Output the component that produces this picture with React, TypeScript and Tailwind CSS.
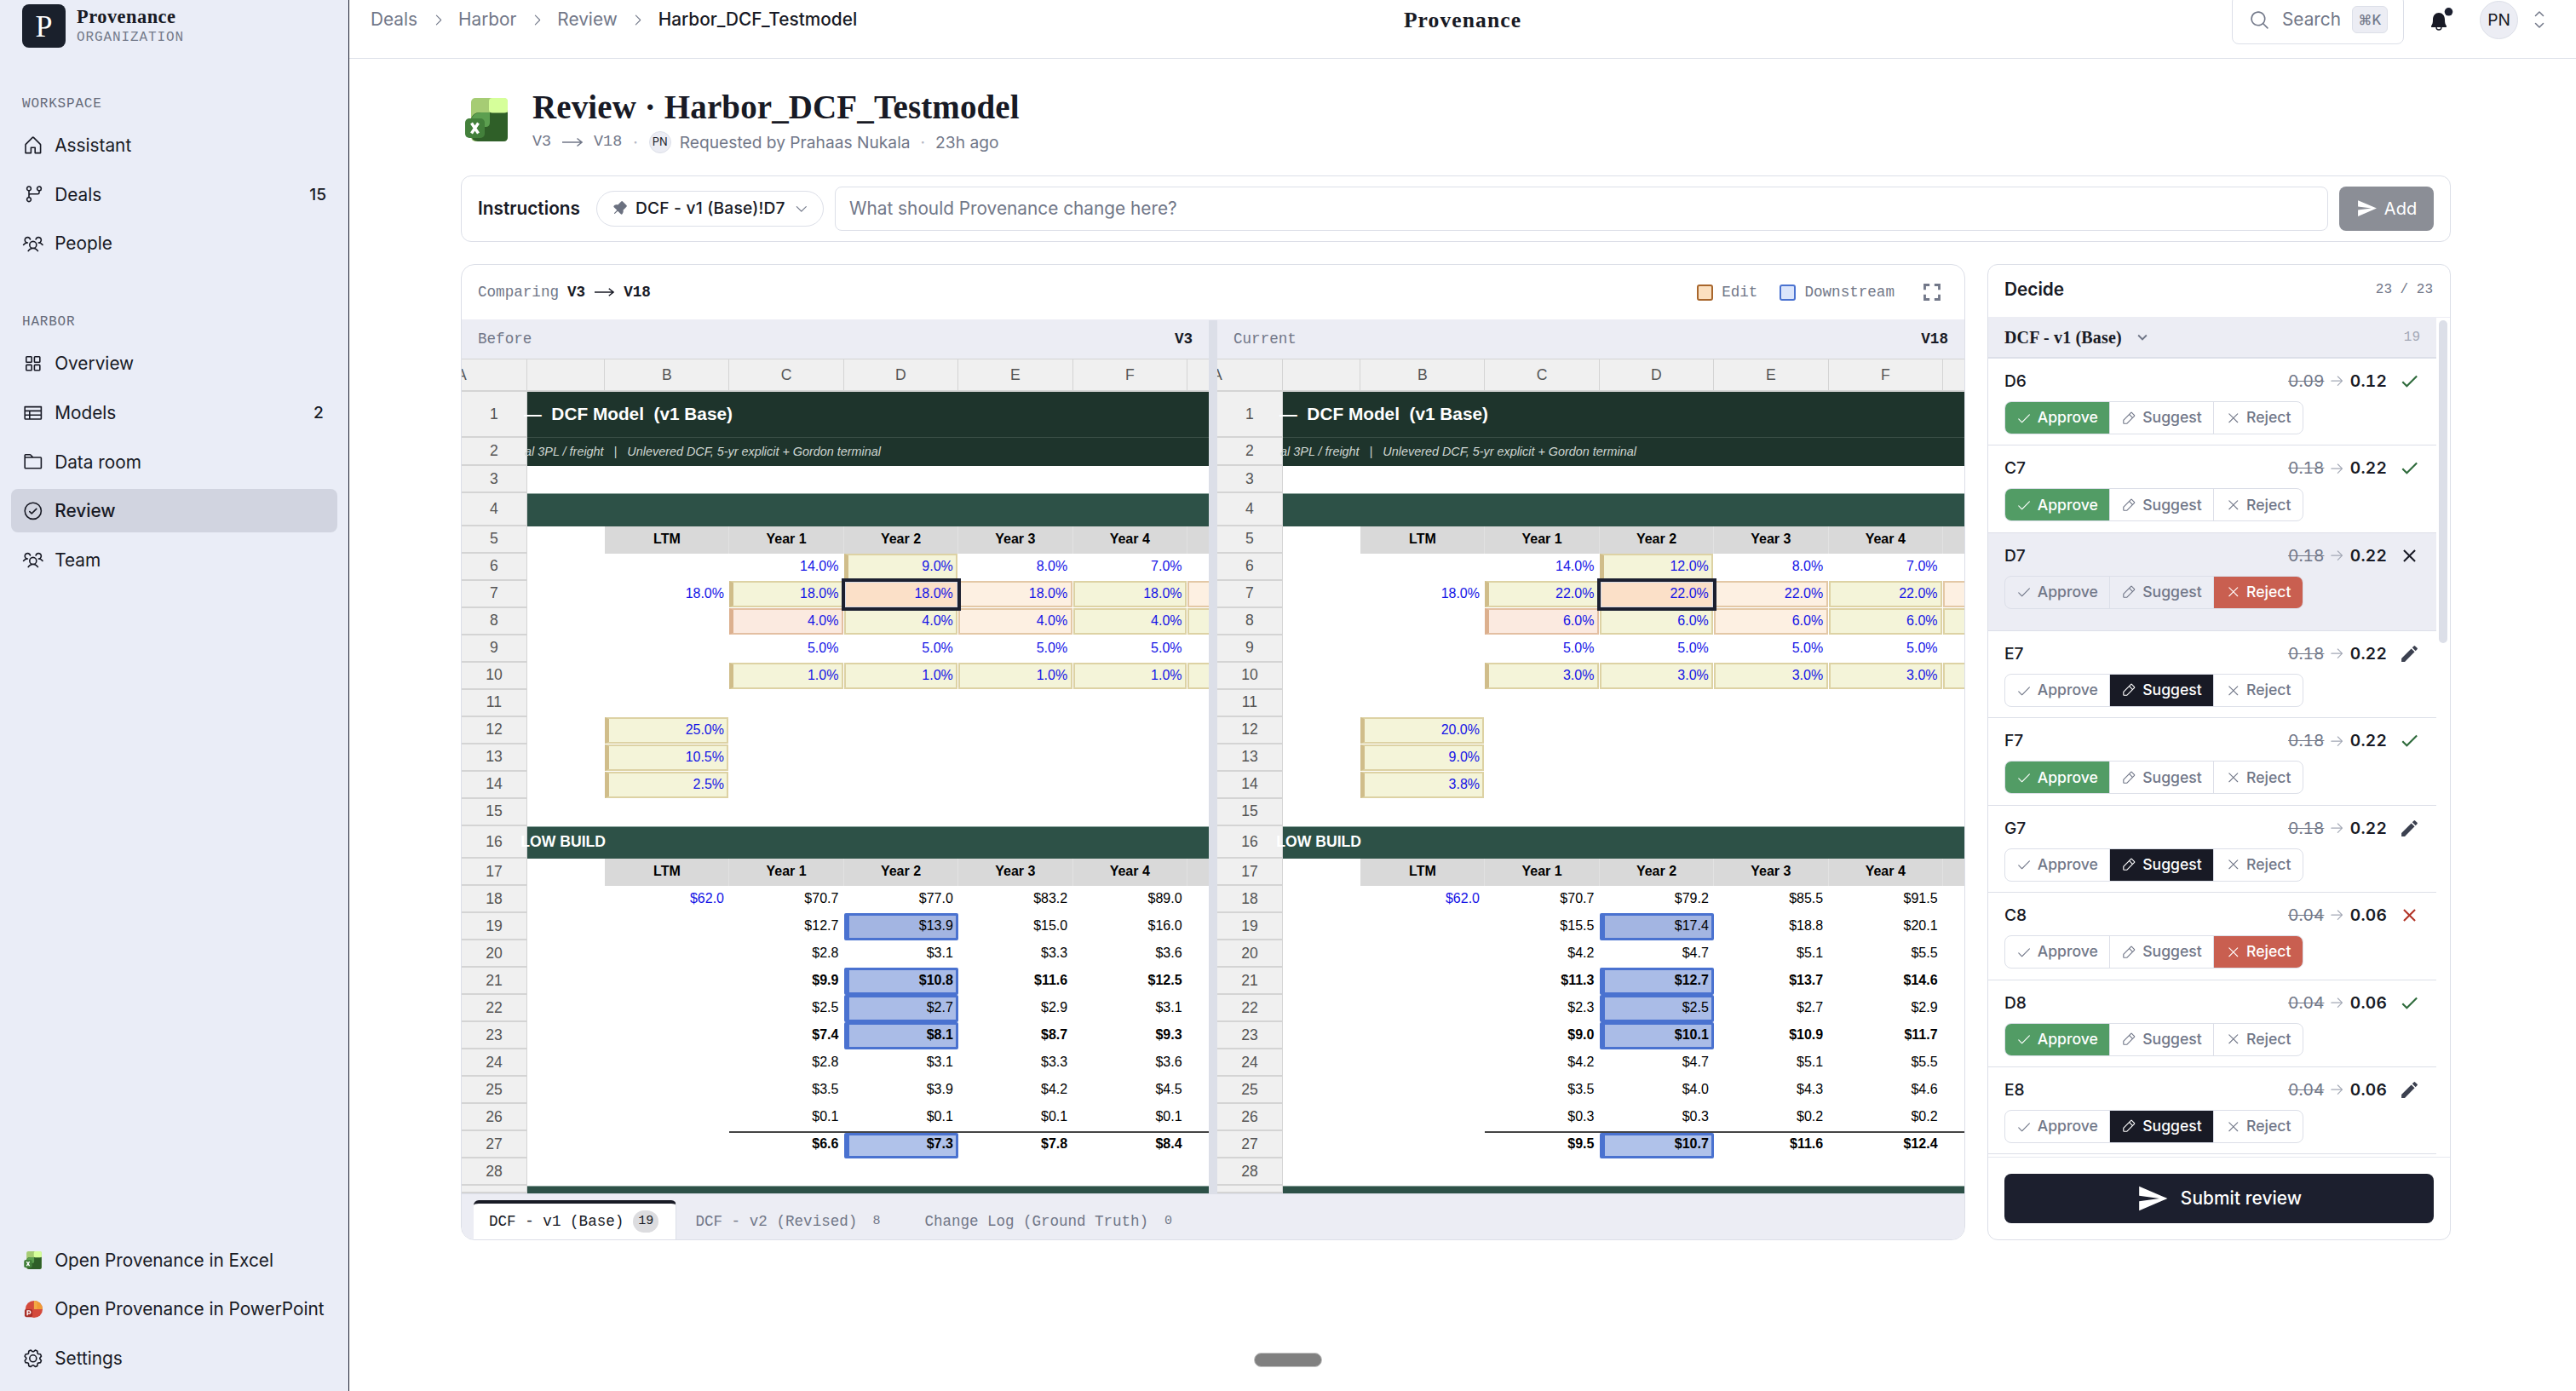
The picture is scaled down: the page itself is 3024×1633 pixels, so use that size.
import type { ReactNode } from "react";
import clsx from "clsx";
import {
  PiArrowRight,
  PiCaretDown,
  PiCaretRight,
  PiCaretUpDown,
  PiCheck,
  PiCheckCircle,
  PiFolder,
  PiGear,
  PiGitBranch,
  PiHouse,
  PiMagnifyingGlass,
  PiPencilSimple,
  PiPushPinFill,
  PiSquaresFour,
  PiTable,
  PiUsersThree,
  PiX,
} from "react-icons/pi";
import { MdCheck, MdClose, MdEdit, MdExpandMore, MdFullscreen, MdSend } from "react-icons/md";

const mono = "font-['Liberation_Mono',monospace]";
const serif = "font-['Liberation_Serif',serif]";
const sans = "font-['Inter',sans-serif]";

const ExcelLogo = ({ className }: { className?: string }) => (
  <svg viewBox="0 0 50 51" className={className}>
    <rect x="7" y="0" width="43" height="51" rx="5" fill="#a6cc74" />
    <path d="M7 25q2-8 10-8h33v29q0 5-5 5H15q-8-1-8-8z" fill="#2f5f28" />
    <path d="M7 26q2-9 12-9h10v12q0 5-5 5H7z" fill="#5c9f50" />
    <rect x="28" y="0" width="22" height="17.500" rx="4" fill="#d6ff9a" />
    <rect x="0" y="24" width="23" height="23" rx="5" fill="#43803b" />
    <path d="M7.500 29.500l8 12M15.500 29.500l-8 12" stroke="#fff" strokeWidth="3.400" />
  </svg>
);

const PowerPointLogo = ({ className }: { className?: string }) => (
  <svg viewBox="0 0 24 24" className={className}>
    <circle cx="13" cy="12" r="11" fill="#d44a3c" />
    <path d="M13 1a11 11 0 0 1 11 11H13z" fill="#f09b35" />
    <path d="M13 1a11 11 0 0 1 4 .8V12h-4z" fill="#f3a845" />
    <rect x="1" y="12" width="10" height="10" rx="2" fill="#a92f28" />
    <path d="M4.500 20v-6h2.200a1.700 1.700 0 0 1 0 3.600H4.500" fill="none" stroke="#fff" strokeWidth="1.500" />
  </svg>
);

const Bell = () => (
  <svg viewBox="0 0 28 28" className="h-7 w-7">
    <path d="M2 21.500c1.500-2 2-3.500 2-7.500C4 9 7 6 11 6s7 3 7 8c0 4 .5 5.500 2 7.500q.5 1.500-1 1.500H3q-1.500 0-1-1.500z" fill="#181a25" />
    <path d="M8 23a3 3 0 0 0 6 0" fill="none" stroke="#181a25" strokeWidth="1.400" />
    <circle cx="22.500" cy="4.800" r="4.800" fill="#1c2030" />
  </svg>
);

const LongArrow = ({ className }: { className?: string }) => (
  <svg viewBox="0 0 24 12" className={className} fill="none" stroke="currentColor" strokeWidth="1.500">
    <path d="M0 6h23M17.500 1.500L23 6l-5.500 4.500" />
  </svg>
);

type NavItemProps = { icon: ReactNode; label: string; count?: string; active?: boolean };

const NavItem = ({ icon, label, count, active }: NavItemProps) => (
  <div
    className={clsx(
      "flex h-[51.2px] items-center rounded-[8px] pr-[13px] pl-[13px] text-[20.8px]",
      active && "bg-[#d1d4e0] font-medium",
    )}
  >
    <span className="mr-[12.6px] flex w-[25.6px] shrink-0 justify-center text-[25.6px]">{icon}</span>
    <span className="flex-1 whitespace-nowrap">{label}</span>
    {count && <span className="min-w-[18px] text-center text-[19.2px] font-medium">{count}</span>}
  </div>
);

const Sidebar = () => (
  <aside className="flex h-full w-[410px] shrink-0 flex-col border-r border-[#1c2030] bg-[#eaedf7] px-[13px]">
    <div className="mt-[5px] flex h-[51px] items-center gap-[13px] px-[13px]">
      <div className={clsx("flex h-[51px] w-[51px] items-center justify-center rounded-[8px] bg-[#1a202c] text-[36px] text-white", serif)}>
        P
      </div>
      <div className="pt-[3px]">
        <div className={clsx("text-[22.4px] leading-[24px] font-bold tracking-[0.022em]", serif)}>Provenance</div>
        <div className={clsx("text-[16px] leading-[24px] tracking-[0.056em] text-[#747a8a]", mono)}>ORGANIZATION</div>
      </div>
    </div>
    <div className={clsx("mt-[56px] px-[13px] text-[16px] leading-[20px] tracking-[0.05em] text-[#666b7a]", mono)}>WORKSPACE</div>
    <nav className="mt-[13px] flex flex-col gap-[6.4px]">
      <NavItem icon={<PiHouse />} label="Assistant" />
      <NavItem icon={<PiGitBranch />} label="Deals" count="15" />
      <NavItem icon={<PiUsersThree />} label="People" />
    </nav>
    <div className={clsx("mt-[57px] px-[13px] text-[16px] leading-[20px] tracking-[0.05em] text-[#666b7a]", mono)}>HARBOR</div>
    <nav className="mt-[13px] flex flex-col gap-[6.4px]">
      <NavItem icon={<PiSquaresFour />} label="Overview" />
      <NavItem icon={<PiTable />} label="Models" count="2" />
      <NavItem icon={<PiFolder />} label="Data room" />
      <NavItem icon={<PiCheckCircle />} label="Review" active />
      <NavItem icon={<PiUsersThree />} label="Team" />
    </nav>
    <nav className="mt-auto mb-[13px] flex flex-col gap-[6.4px]">
      <NavItem icon={<ExcelLogo className="h-[21px] w-[21px]" />} label="Open Provenance in Excel" />
      <NavItem icon={<PowerPointLogo className="h-[22px] w-[22px]" />} label="Open Provenance in PowerPoint" />
      <NavItem icon={<PiGear />} label="Settings" />
    </nav>
  </aside>
);

const Header = () => (
  <header className="grid h-[69px] grid-cols-[1fr_auto_1fr] items-center border-b border-[#dcdfe8] pr-[31px] pb-[22px] pl-[26px]">
    <div className="flex items-center gap-[15.500px] text-[20.8px] text-[#717788]">
      <span className="-ml-px">Deals</span>
      <PiCaretRight className="text-[17px]" />
      <span>Harbor</span>
      <PiCaretRight className="text-[17px]" />
      <span>Review</span>
      <PiCaretRight className="text-[17px]" />
      <span className="font-medium text-[#181a25]">Harbor_DCF_Testmodel</span>
    </div>
    <div className={clsx("pt-px pl-[5px] text-[25.6px] leading-none font-bold tracking-[0.042em]", serif)}>Provenance</div>
    <div className="flex h-[46px] items-center justify-end">
      <div className="mr-[30px] flex h-[58px] w-[202px] shrink-0 items-center rounded-[8px] border border-[#dcdfe8] pl-[19px] text-[20.8px] text-[#717788]">
        <PiMagnifyingGlass className="text-[25px]" />
        <span className="ml-[14px]">Search</span>
        <span className="ml-[13px] flex h-[32px] w-[42px] items-center justify-center rounded-[6px] border border-[#dcdfe8] bg-[#ecedf4] text-[16px] font-medium">
          ⌘K
        </span>
      </div>
      <Bell />
      <div className="ml-[31px] flex h-[45px] w-[45px] items-center justify-center rounded-full border border-[#dcdfe8] bg-[#ecedf4] text-[19.2px]">
        PN
      </div>
      <PiCaretUpDown className="ml-[13px] text-[24px] text-[#717788]" />
    </div>
  </header>
);

const Title = () => (
  <div className="flex h-[60px] items-start">
    <ExcelLogo className="mt-[5px] ml-[5px] h-[51px] w-[50px]" />
    <div className="ml-[29px]">
      <h1 className={clsx("-mt-[4px] text-[39px] leading-[40px] font-bold tracking-[0.003em] whitespace-nowrap", serif)}>
        Review · Harbor_DCF_Testmodel
      </h1>
      <div className="mt-[8px] flex h-[26px] items-center text-[19.2px] text-[#717788]">
        <span className={clsx("text-[18.4px]", mono)}>V3</span>
        <LongArrow className="mr-[13px] ml-[13px] h-[12px] w-[24px]" />
        <span className={clsx("text-[18.4px]", mono)}>V18</span>
        <span className="mx-[13px] text-[#b4b8c4]">·</span>
        <span className="mr-[10px] flex h-[26px] w-[26px] items-center justify-center rounded-full border border-[#dcdfe8] bg-[#ecedf4] text-[12.8px] text-[#181a25]">
          PN
        </span>
        <span>Requested by Prahaas Nukala</span>
        <span className="mx-[12px] text-[#b4b8c4]">·</span>
        <span>23h ago</span>
      </div>
    </div>
  </div>
);

const Instructions = () => (
  <div className="mt-[36px] flex h-[78px] items-center rounded-[12px] border border-[#dcdfe8] pr-[19px] pb-px pl-[19px] text-[20.8px]">
    <span className="w-[139px] text-[20.8px] font-semibold">Instructions</span>
    <div className="flex h-[42px] w-[267px] items-center rounded-full border border-[#dcdfe8] pl-[17px] text-[19.2px] font-medium">
      <PiPushPinFill className="text-[19px] text-[#6b7180]" />
      <span className="ml-[9px] flex-1 tracking-[0.01em]">DCF - v1 (Base)!D7</span>
      <PiCaretDown className="mr-[16px] text-[17.6px] text-[#717788]" />
    </div>
    <div className="ml-[13px] flex h-[52px] flex-1 items-center rounded-[8px] border border-[#dcdfe8] pl-[16px] text-[#717788]">
      What should Provenance change here?
    </div>
    <button className="ml-[13px] flex h-[52px] w-[111px] items-center justify-center gap-[8px] rounded-[8px] bg-[#8b8e96] text-[20px] text-white">
      <MdSend className="text-[25px]" />
      Add
    </button>
  </div>
);

type Mark = "approve" | "suggest" | "reject" | "selected" | "blueA" | "blueB" | "blueC";

// cells run over the columns B to G
type SheetRow = {
  n: number;
  height?: number;
  kind?: "title" | "subtitle" | "section" | "years";
  text?: string;
  bold?: boolean;
  blue?: boolean;
  total?: boolean;
  before?: string[];
  after?: string[];
  marks?: (Mark | null)[];
};

const rows: SheetRow[] = [
  { n: 1, height: 53.6, kind: "title", text: "—  DCF Model  (v1 Base)" },
  { n: 2, height: 33.6, kind: "subtitle", text: "al 3PL / freight   |   Unlevered DCF, 5-yr explicit + Gordon terminal" },
  { n: 3 },
  { n: 4, height: 38.4, kind: "section" },
  { n: 5, kind: "years" },
  { n: 6, blue: true, before: ["", "14.0%", "9.0%", "8.0%", "7.0%"], after: ["", "14.0%", "12.0%", "8.0%", "7.0%"], marks: [null, null, "approve"] },
  {
    n: 7,
    blue: true,
    before: ["18.0%", "18.0%", "18.0%", "18.0%", "18.0%"],
    after: ["18.0%", "22.0%", "22.0%", "22.0%", "22.0%"],
    marks: [null, "approve", "selected", "suggest", "approve", "suggest"],
  },
  {
    n: 8,
    blue: true,
    before: ["", "4.0%", "4.0%", "4.0%", "4.0%"],
    after: ["", "6.0%", "6.0%", "6.0%", "6.0%"],
    marks: [null, "reject", "approve", "suggest", "approve", "approve"],
  },
  { n: 9, blue: true, before: ["", "5.0%", "5.0%", "5.0%", "5.0%"], after: ["", "5.0%", "5.0%", "5.0%", "5.0%"] },
  {
    n: 10,
    blue: true,
    before: ["", "1.0%", "1.0%", "1.0%", "1.0%"],
    after: ["", "3.0%", "3.0%", "3.0%", "3.0%"],
    marks: [null, "approve", "approve", "approve", "approve", "approve"],
  },
  { n: 11 },
  { n: 12, blue: true, before: ["25.0%"], after: ["20.0%"], marks: ["approve"] },
  { n: 13, blue: true, before: ["10.5%"], after: ["9.0%"], marks: ["approve"] },
  { n: 14, blue: true, before: ["2.5%"], after: ["3.8%"], marks: ["approve"] },
  { n: 15 },
  { n: 16, height: 38.4, kind: "section", text: "LOW BUILD" },
  { n: 17, kind: "years" },
  { n: 18, before: ["$62.0", "$70.7", "$77.0", "$83.2", "$89.0"], after: ["$62.0", "$70.7", "$79.2", "$85.5", "$91.5"] },
  { n: 19, before: ["", "$12.7", "$13.9", "$15.0", "$16.0"], after: ["", "$15.5", "$17.4", "$18.8", "$20.1"], marks: [null, null, "blueA"] },
  { n: 20, before: ["", "$2.8", "$3.1", "$3.3", "$3.6"], after: ["", "$4.2", "$4.7", "$5.1", "$5.5"] },
  { n: 21, bold: true, before: ["", "$9.9", "$10.8", "$11.6", "$12.5"], after: ["", "$11.3", "$12.7", "$13.7", "$14.6"], marks: [null, null, "blueB"] },
  { n: 22, before: ["", "$2.5", "$2.7", "$2.9", "$3.1"], after: ["", "$2.3", "$2.5", "$2.7", "$2.9"], marks: [null, null, "blueB"] },
  { n: 23, bold: true, before: ["", "$7.4", "$8.1", "$8.7", "$9.3"], after: ["", "$9.0", "$10.1", "$10.9", "$11.7"], marks: [null, null, "blueB"] },
  { n: 24, before: ["", "$2.8", "$3.1", "$3.3", "$3.6"], after: ["", "$4.2", "$4.7", "$5.1", "$5.5"] },
  { n: 25, before: ["", "$3.5", "$3.9", "$4.2", "$4.5"], after: ["", "$3.5", "$4.0", "$4.3", "$4.6"] },
  { n: 26, before: ["", "$0.1", "$0.1", "$0.1", "$0.1"], after: ["", "$0.3", "$0.3", "$0.2", "$0.2"] },
  { n: 27, bold: true, total: true, before: ["", "$6.6", "$7.3", "$7.8", "$8.4"], after: ["", "$9.5", "$10.7", "$11.6", "$12.4"], marks: [null, null, "blueC"] },
  { n: 28 },
  { n: 29, height: 9.4, kind: "section" },
];

const years = ["LTM", "Year 1", "Year 2", "Year 3", "Year 4", ""];

const markStyles: Record<Mark, string> = {
  approve: "mr-px mb-px border-2 border-[#ddd2a4] bg-[#f4f4d9]",
  suggest: "mr-px mb-px border-2 border-[#e3c8a6] bg-[#fdf0e2]",
  reject: "mr-px mb-px border-2 border-[#e3bfa2] bg-[#fbeae0]",
  selected: "z-10 bg-[#fbe0c8] border border-[#d8dbe6] outline-[4.500px] outline-[#1c2030] m-px",
  blueA: "border-[3px] border-[#4a72d0] bg-[#a3b5e2] rounded-[2px]",
  blueB: "border-[3px] border-[#4a72d0] bg-[#aabce7] rounded-[2px]",
  blueC: "border-[3px] border-[#4a72d0] bg-[#b0c2ea] rounded-[2px]",
};

const leadStyles: Record<Mark, string> = {
  approve: "border-l-[5px] border-l-[#d0bd8a]",
  suggest: "border-l-[5px] border-l-[#dcb793]",
  reject: "border-l-[5px] border-l-[#dcb08e]",
  selected: "",
  blueA: "border-l-[6px]",
  blueB: "border-l-[6px]",
  blueC: "border-l-[6px]",
};

const gridCols = "grid grid-cols-[91.400px_146px_134.4px_134.4px_134.4px_134.4px_134.4px]";

const RowBody = ({ row, side }: { row: SheetRow; side: "before" | "after" }) => {
  if (row.kind === "title") {
    return (
      <div className="flex h-full items-center border-b border-[#3b4f47] bg-[#1e342c] pb-[2px] text-[20.8px] font-bold text-white">
        <span className="flex w-[241px] justify-end whitespace-pre">{row.text}</span>
      </div>
    );
  }
  if (row.kind === "subtitle") {
    return (
      <div className="flex h-full items-center bg-[#1e342c] text-[14.4px] text-[#cfd6d2] italic">
        <span className="flex w-[415px] justify-end whitespace-pre">{row.text}</span>
      </div>
    );
  }
  if (row.kind === "section") {
    return (
      <div className="flex h-full items-center border-t border-[#8aa39b] bg-[#2d5147] pb-[2px] text-[17.6px] font-bold text-white">
        <span className="flex w-[92px] justify-end whitespace-pre">{row.text}</span>
      </div>
    );
  }
  if (row.kind === "years") {
    return (
      <div className={clsx("h-full", gridCols)}>
        <span />
        {years.map((year, i) => (
          <span key={i} className="flex items-center justify-center border-r border-[#e2e2e2] bg-[#d9d9d9] pb-px text-[16px] font-bold text-black">
            {year}
          </span>
        ))}
      </div>
    );
  }
  const values = row[side] ?? [];
  const marks = row.marks ?? [];
  return (
    <div className={clsx("h-full", gridCols, row.bold && "font-bold")}>
      <span />
      {years.map((_, i) => {
        const mark = marks[i];
        return (
          <div key={i} className={clsx("relative flex", row.total && i > 0 && "border-t-2 border-[#444]")}>
            {mark && <div className={clsx("absolute inset-0", markStyles[mark], !marks[i - 1] && leadStyles[mark])} />}
            <span
              className={clsx(
                "relative z-10 flex flex-1 items-center justify-end pr-[6.400px] text-[16px]",
                row.total ? "pb-[3px]" : "pb-px",
                row.blue || (row.n === 18 && i === 0) ? "text-[#1414e6]" : "text-black",
              )}
            >
              {values[i]}
            </span>
          </div>
        );
      })}
    </div>
  );
};

const Sheet = ({ side, label, version }: { side: "before" | "after"; label: string; version: string }) => (
  <div className="w-[877px] overflow-hidden">
    <div className={clsx("flex h-[45px] items-center justify-between bg-[#ecedf4] px-[19px] text-[17.6px]", mono)}>
      <span className="text-[#717788]">{label}</span>
      <span className="font-bold">{version}</span>
    </div>
    <div className="font-['Liberation_Sans',sans-serif]">
      <div className="flex h-[39px] w-[1100px] border-t border-b-2 border-[#d4d4d4] bg-[#f0f0f0] text-[17.6px] text-[#555]">
        <span className="flex w-[77px] items-center border-r border-[#d4d4d4]">
          <span className="-ml-[6px]">A</span>
        </span>
        <div className={gridCols}>
          {["", "B", "C", "D", "E", "F", "G"].map((c, i) => (
            <span key={i} className="flex items-center justify-center border-r border-[#d4d4d4]">
              {c}
            </span>
          ))}
        </div>
      </div>
      {rows.map((row) => (
        <div key={row.n} className="flex w-[1100px]" style={{ height: row.height ?? 32 }}>
          <span className="flex w-[77px] shrink-0 items-center justify-center border-r border-b-2 border-[#d4d4d4] bg-[#f0f0f0] text-[17.6px] text-[#555]">
            {row.n < 29 && row.n}
          </span>
          <div className="min-w-0 flex-1">
            <RowBody row={row} side={side} />
          </div>
        </div>
      ))}
    </div>
  </div>
);

const ComparePanel = () => (
  <section className="flex h-[1146px] w-[1766px] flex-col overflow-hidden rounded-[16px] border border-[#dcdfe8] bg-white">
    <div className={clsx("flex h-[65px] shrink-0 items-center border-b border-[#ecedf4] pr-[21px] pl-[19px] text-[17.6px] text-[#717788]", mono)}>
      <span>Comparing</span>
      <span className="ml-[10px] flex items-center font-bold text-[#181a25]">
        V3
        <LongArrow className="mx-[11px] h-[12px] w-[23px]" />
        V18
      </span>
      <span className="ml-auto h-[19px] w-[19px] rounded-[3px] border-2 border-[#a8662c] bg-[#fbe0c0]" />
      <span className="ml-[10px]">Edit</span>
      <span className="ml-[26px] h-[19px] w-[19px] rounded-[3px] border-2 border-[#4a72d0] bg-[#dbe5fb]" />
      <span className="ml-[10px]">Downstream</span>
      <MdFullscreen className="ml-[27px] text-[34px]" />
    </div>
    <div className="flex h-[1025px] shrink-0 overflow-hidden">
      <Sheet side="before" label="Before" version="V3" />
      <div className="w-[10px] shrink-0 bg-[#dcdfe8]" />
      <Sheet side="after" label="Current" version="V18" />
    </div>
    <div className={clsx("flex flex-1 items-end gap-[4px] border-t border-[#dcdfe8] bg-[#ecedf4] pl-[14px] text-[17.6px]", mono)}>
      <div className="flex h-[46px] items-center rounded-t-[6px] border-t-[4px] border-r border-[#181a25] border-r-[#dcdfe8] bg-white pr-[20px] pl-[18px]">
        DCF - v1 (Base)
        <span className="ml-[11px] flex h-[26px] w-[30px] items-center justify-center rounded-full bg-[#dcdcdf] text-[15px]">19</span>
      </div>
      <div className="flex h-[46px] items-center pt-[4px] pr-[19px] pl-[18px] text-[#717788]">
        DCF - v2 (Revised)
        <span className="ml-[9px] flex w-[27px] justify-center text-[15px]">8</span>
      </div>
      <div className="flex h-[46px] items-center pt-[4px] pl-[20px] text-[#717788]">
        <span className="tracking-[-0.003em]">Change Log (Ground Truth)</span>
        <span className="ml-[10px] flex w-[27px] justify-center text-[15px]">0</span>
      </div>
    </div>
  </section>
);

type Choice = "approve" | "suggest" | "reject";

const decisions: { cell: string; from: string; to: string; choice: Choice; current?: boolean }[] = [
  { cell: "D6", from: "0.09", to: "0.12", choice: "approve" },
  { cell: "C7", from: "0.18", to: "0.22", choice: "approve" },
  { cell: "D7", from: "0.18", to: "0.22", choice: "reject", current: true },
  { cell: "E7", from: "0.18", to: "0.22", choice: "suggest" },
  { cell: "F7", from: "0.18", to: "0.22", choice: "approve" },
  { cell: "G7", from: "0.18", to: "0.22", choice: "suggest" },
  { cell: "C8", from: "0.04", to: "0.06", choice: "reject" },
  { cell: "D8", from: "0.04", to: "0.06", choice: "approve" },
  { cell: "E8", from: "0.04", to: "0.06", choice: "suggest" },
];

const StatusIcon = ({ choice, current }: { choice: Choice; current?: boolean }) => {
  if (choice === "approve") return <MdCheck className="text-[#2f6b3c]" />;
  if (choice === "suggest") return <MdEdit className="text-[#3c4150]" />;
  return <MdClose className={current ? "text-[#181a25]" : "text-[#b23427]"} />;
};

const DecisionRow = ({ cell, from, to, choice, current }: (typeof decisions)[number]) => (
  <div className={clsx("border-b border-[#dcdfe8] px-[19px]", current ? "h-[115.2px] bg-[#ecedf4]" : "h-[102.4px]")}>
    <div className="flex h-[50px] items-center pt-[3px] text-[19.2px]">
      <span className="flex-1 font-medium">{cell}</span>
      <span className="text-[#717788] tabular-nums line-through decoration-1">{from}</span>
      <PiArrowRight className="mr-[6px] ml-[6px] text-[18.400px] text-[#a3a8b5]" />
      <span className="font-semibold tracking-[0.01em] tabular-nums">{to}</span>
      <span className="ml-[14px] text-[25px]">
        <StatusIcon choice={choice} current={current} />
      </span>
    </div>
    <div className="flex h-[39px] w-[351px] overflow-hidden rounded-[8px] border border-[#dcdfe8] text-[17.6px] font-medium text-[#717788]">
      <span
        className={clsx(
          "flex w-[123px] items-center justify-center gap-[7px] border-r border-[#dcdfe8]",
          choice === "approve" && "bg-[#529c65] text-white",
        )}
      >
        <PiCheck className="text-[17.6px]" />
        Approve
      </span>
      <span
        className={clsx(
          "flex w-[122px] items-center justify-center gap-[7px] border-r border-[#dcdfe8]",
          choice === "suggest" && "bg-[#181a25] text-white",
        )}
      >
        <PiPencilSimple className="text-[18px]" />
        Suggest
      </span>
      <span className={clsx("flex flex-1 items-center justify-center gap-[7px]", choice === "reject" && "bg-[#c95f50] text-white")}>
        <PiX className="text-[17.6px]" />
        Reject
      </span>
    </div>
  </div>
);

const DecidePanel = () => (
  <section className="flex h-[1146px] w-[544px] flex-col overflow-hidden rounded-[12px] border border-[#dcdfe8] bg-white">
    <div className="flex h-[62px] shrink-0 items-center justify-between border-b border-[#ecedf4] pr-[20px] pb-[4px] pl-[19px]">
      <span className="text-[20.8px] font-semibold">Decide</span>
      <span className={clsx("text-[16px] text-[#717788]", mono)}>23 / 23</span>
    </div>
    <div className="flex h-[985px] shrink-0">
      <div className="h-full w-[526px] overflow-hidden">
        <div className="flex h-[48px] items-center border-b-2 border-[#dcdfe8] bg-[#ecedf4] px-[19px]">
          <span className={clsx("text-[20px] font-bold tracking-[0.008em]", serif)}>DCF - v1 (Base)</span>
          <MdExpandMore className="ml-[13px] flex-none text-[22px] text-[#717788]" />
          <span className={clsx("ml-auto text-[16px] text-[#a3a8b5]", mono)}>19</span>
        </div>
        {decisions.map((d) => (
          <DecisionRow key={d.cell} {...d} />
        ))}
      </div>
      <div className="mt-[3px] ml-[3px] h-[379px] w-[10px] rounded-full bg-[#dcdfe8]" />
    </div>
    <div className="flex-1 border-t border-[#e6e8ef] px-[19px] pt-[19px]">
      <button className="flex h-[58px] w-full items-center justify-center gap-[14px] rounded-[8px] bg-[#1c1f2e] text-[20.8px] font-medium tracking-[0.005em] text-white">
        <MdSend className="text-[38px]" />
        Submit review
      </button>
    </div>
  </section>
);

export default function App() {
  return (
    <div className={clsx("relative flex h-[1633px] w-[3024px] overflow-hidden bg-white text-[#181a25]", sans)}>
      <Sidebar />
      <div className="flex min-w-0 flex-1 flex-col">
        <Header />
        <main className="ml-[131px] w-[2336px] pt-[41px]">
          <Title />
          <Instructions />
          <div className="mt-[26px] flex justify-between">
            <ComparePanel />
            <DecidePanel />
          </div>
        </main>
      </div>
      <div className="absolute top-[1588px] left-[1472px] h-[17px] w-[80px] rounded-full border border-[#c4c4c4] bg-[#808080]" />
    </div>
  );
}
